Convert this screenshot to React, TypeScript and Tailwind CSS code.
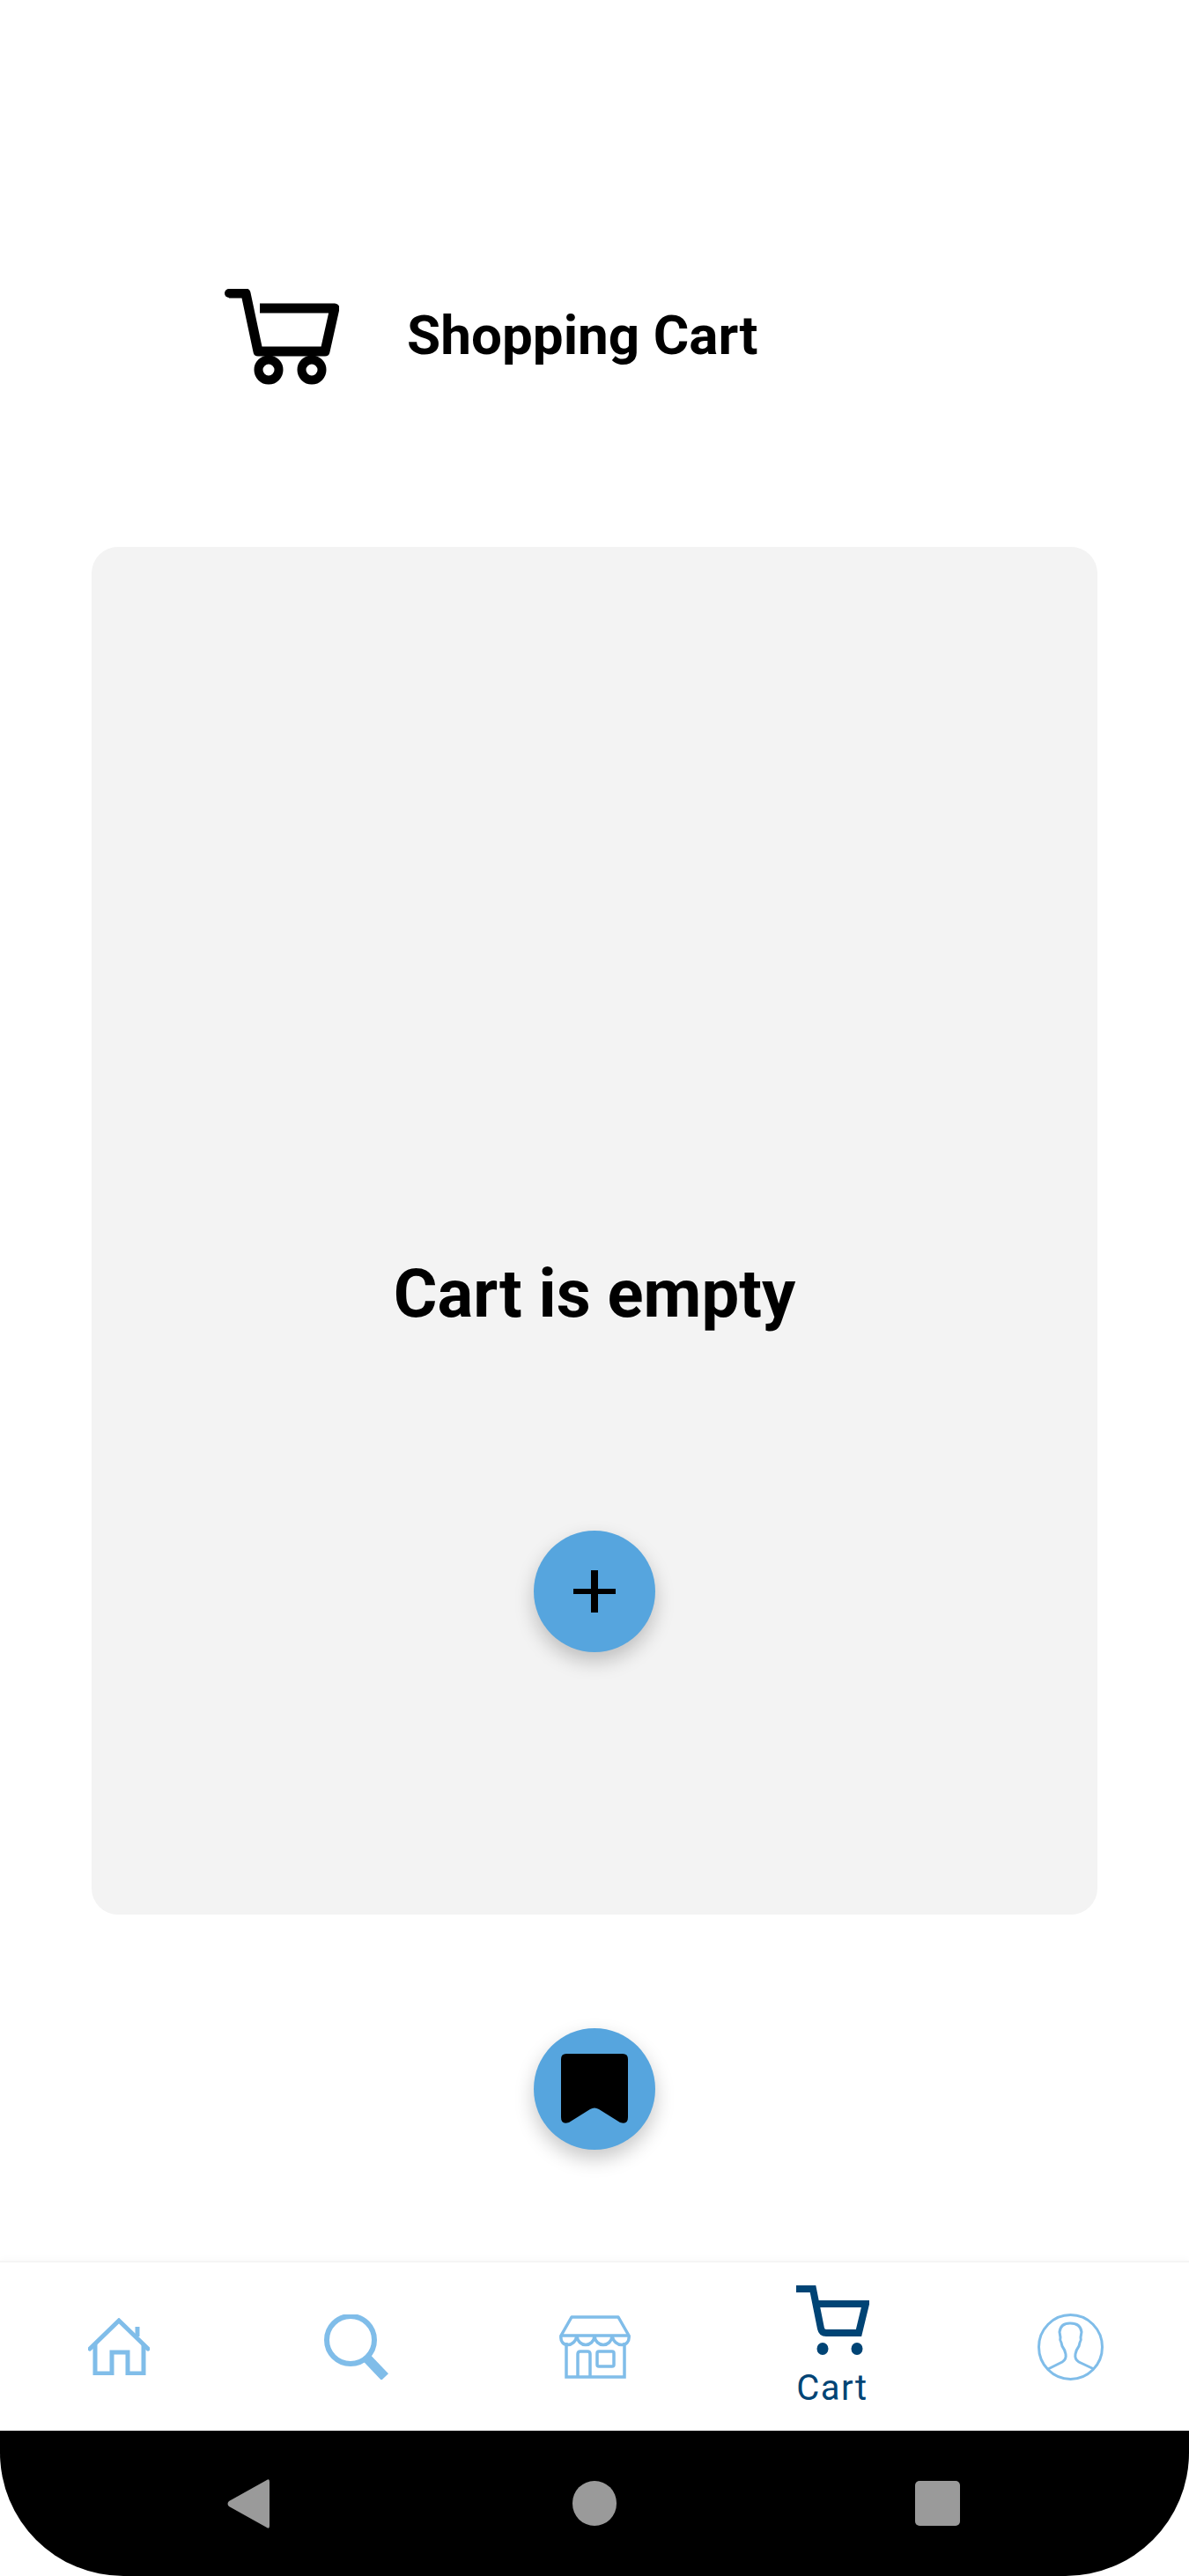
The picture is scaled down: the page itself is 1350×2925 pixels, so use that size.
const HeaderCart = () => (
  <svg width="130" height="110" viewBox="0 0 130 110" fill="none" stroke="#000">
    <path d="M5 5H24L38 71H114L125 22H40" strokeWidth="11" strokeLinejoin="round" />
    <path d="M5 5H12" strokeWidth="10" strokeLinecap="round" />
    <circle cx="50" cy="92" r="11.5" strokeWidth="10" />
    <circle cx="99" cy="92" r="11.5" strokeWidth="10" />
  </svg>
);

const HomeIcon = () => (
  <svg width="70" height="65" viewBox="0 0 70 65" fill="none" stroke="#80bde9" strokeWidth="5">
    <path d="M2 35L35 3L68 35" strokeLinecap="round" />
    <path d="M56 21V10" />
    <path d="M8 30V63H27V39H45V63H63V30" />
  </svg>
);

const SearchIcon = () => (
  <svg width="74" height="74" viewBox="0 0 74 74" fill="none" stroke="#80bde9">
    <circle cx="30" cy="29" r="27" strokeWidth="6" />
    <path d="M48 49L69 71" strokeWidth="11" />
  </svg>
);

const StoreIcon = () => (
  <svg width="81" height="72" viewBox="0 0 81 72" fill="none" stroke="#80bde9" strokeWidth="3.5">
    <path d="M14 2H67L79 23H2Z" strokeLinejoin="round" />
    <path d="M2 23C0 37 18 37 20 23C21 37 39 37 40 23C41 37 59 37 60 23C62 37 81 37 79 23" />
    <path d="M8 31V70H74V31" />
    <path d="M21 70V44Q21 41 24 41H32Q35 41 35 44V70" />
    <rect x="43" y="41" width="19" height="17" rx="2" />
  </svg>
);

const NavCart = () => (
  <svg width="83" height="79" viewBox="0 0 83 79" fill="none" stroke="#004475">
    <path d="M0 4H19L28 49Q29 54 34 54H71L79 21H21" strokeWidth="8" />
    <ellipse cx="30" cy="72" rx="6.5" ry="7" fill="#004475" stroke="none" />
    <ellipse cx="69" cy="72" rx="6.5" ry="7" fill="#004475" stroke="none" />
  </svg>
);

const ProfileIcon = () => (
  <svg width="75" height="76" viewBox="0 0 75 76" fill="none" stroke="#80bde9" strokeWidth="3">
    <ellipse cx="37.5" cy="38" rx="36" ry="36.5" />
    <path d="M12 63L28 55Q33 52 32 46Q31 41 28 37L27 33Q25 30 26 27L25 21Q26 11 37 11Q49 11 50 21L49 27Q50 30 48 33L47 37Q44 41 43 46Q42 52 47 55L64 63" />
  </svg>
);

const BookmarkIcon = () => (
  <svg width="76" height="80" viewBox="0 0 76 80" fill="#000">
    <path d="M6 0H70Q76 0 76 6V72Q76 81 67 78L43 63Q38 60 33 63L9 78Q0 81 0 72V6Q0 0 6 0Z" />
  </svg>
);

const PlusIcon = () => (
  <svg width="48" height="48" viewBox="0 0 48 48" fill="none" stroke="#000">
    <path d="M24 0V48" strokeWidth="8" />
    <path d="M0 24H48" strokeWidth="6" />
  </svg>
);

export default function App() {
  return (
    <div className="flex h-[2925px] w-[1350px] flex-col bg-white font-['Roboto',sans-serif] text-black">
      {/* header */}
      <div className="flex items-start pl-[255px] pt-[328px]">
        <HeaderCart />
        <h1 className="ml-[77px] mt-[17px] text-[62px] leading-[72px] font-bold">Shopping Cart</h1>
      </div>

      {/* cart card */}
      <div className="mx-[104px] mt-[183px] flex h-[1553px] w-[1142px] flex-col items-center rounded-[30px] bg-[#f3f3f3] pt-[803px]">
        <p className="text-[76px] leading-[90px] font-bold">Cart is empty</p>
        <button className="mt-[224px] flex h-[138px] w-[138px] items-center justify-center rounded-full bg-[#56a5de] shadow-[0_10px_22px_rgba(0,0,0,0.22)]">
          <PlusIcon />
        </button>
      </div>

      <div className="mt-[129px] flex justify-center">
        <button className="flex h-[138px] w-[138px] items-center justify-center rounded-full bg-[#56a5de] shadow-[0_10px_22px_rgba(0,0,0,0.22)]">
          <BookmarkIcon />
        </button>
      </div>

      {/* bottom nav */}
      <nav className="mt-auto grid h-[193px] grid-cols-5 items-center border-t-2 border-[#f5f5f5] shadow-[0_-3px_6px_rgba(0,0,0,0.02)]">
        <div className="flex justify-center">
          <HomeIcon />
        </div>
        <div className="flex justify-center">
          <SearchIcon />
        </div>
        <div className="flex justify-center">
          <StoreIcon />
        </div>
        <div className="flex flex-col items-center">
          <NavCart />
          <span className="mt-[14px] text-[40px] leading-[47px] tracking-[1.5px] text-[#004475]">Cart</span>
        </div>
        <div className="flex justify-center">
          <ProfileIcon />
        </div>
      </nav>

      {/* android nav bar */}
      <div className="flex h-[165px] items-center rounded-b-[140px] bg-black pl-[258px]">
        <svg width="48" height="56" viewBox="0 0 48 56" fill="#9a9a9a">
          <path d="M48 3V53Q48 57 45 55L2 31Q-1 28 2 25L45 1Q48 -1 48 3Z" />
        </svg>
        <div className="ml-[344px] h-[51px] w-[50px] rounded-full bg-[#9a9a9a]" />
        <div className="ml-[339px] h-[51px] w-[51px] rounded-[5px] bg-[#9a9a9a]" />
      </div>
    </div>
  );
}
